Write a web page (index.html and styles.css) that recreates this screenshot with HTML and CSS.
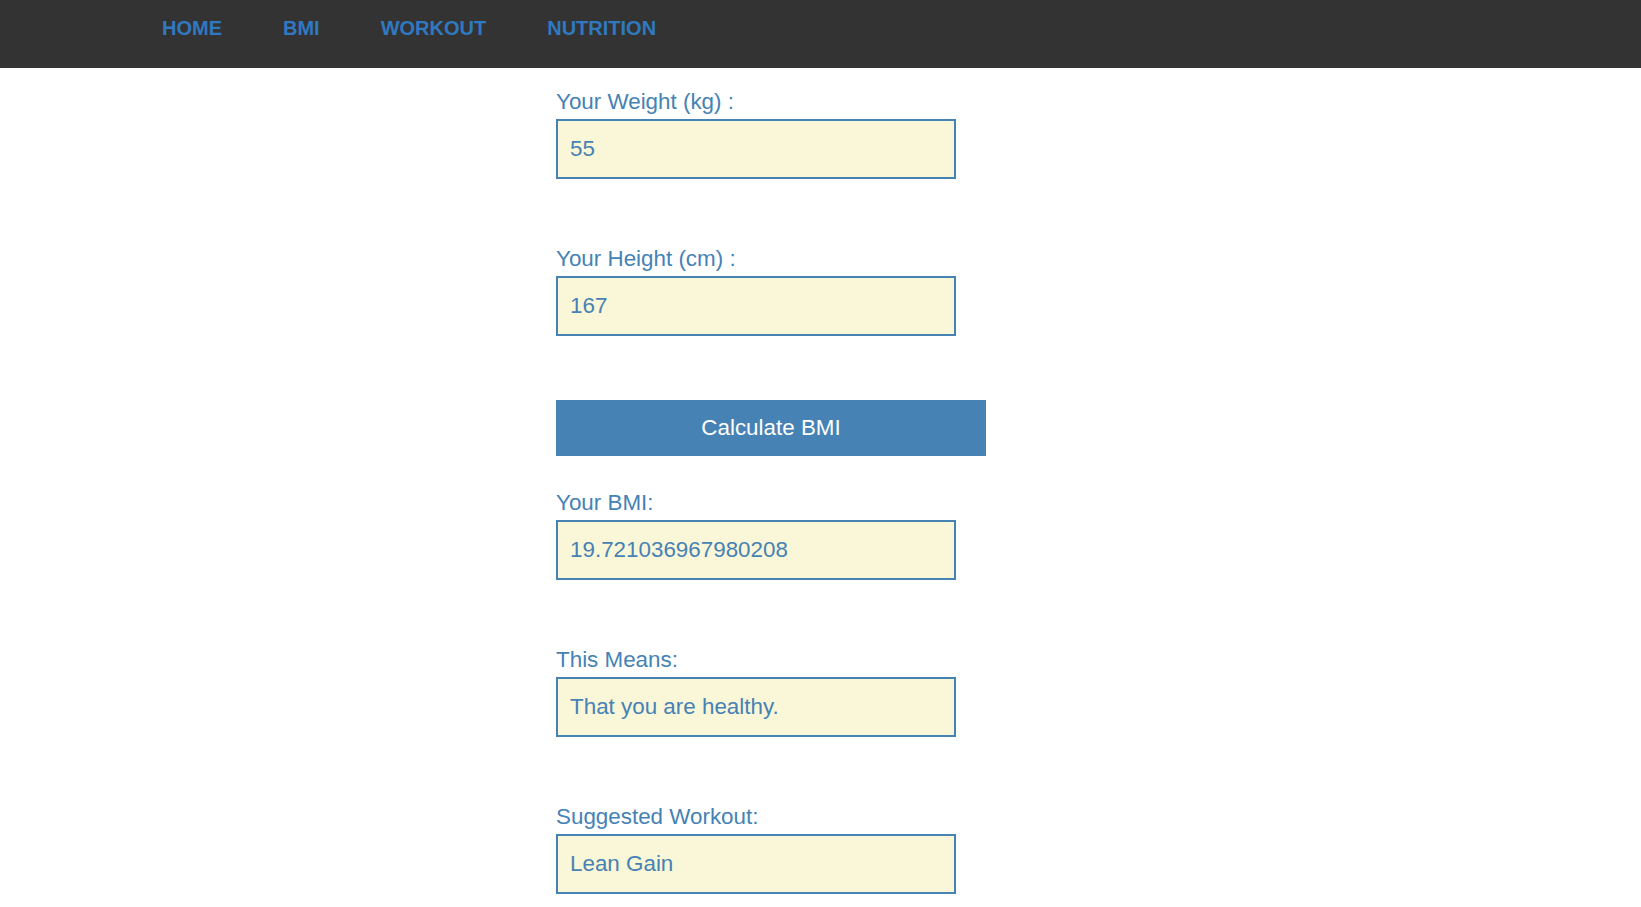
FILE: index.html
```html
<!DOCTYPE html>
<html lang="en">
<head>
<meta charset="utf-8">
<title>BMI Calculator</title>
<link rel="stylesheet" href="styles.css">
</head>
<body>
<nav class="topnav">
  <ul class="menu">
    <li><a href="#" class="menu-link">HOME</a></li>
    <li><a href="#" class="menu-link">BMI</a></li>
    <li><a href="#" class="menu-link">WORKOUT</a></li>
    <li><a href="#" class="menu-link">NUTRITION</a></li>
  </ul>
</nav>
<main class="bmi-form">
  <div class="field">
    <label class="field-label" for="weight">Your Weight (kg) :</label>
    <input class="field-input" id="weight" type="text" value="55">
  </div>
  <div class="field field-next">
    <label class="field-label" for="height">Your Height (cm) :</label>
    <input class="field-input" id="height" type="text" value="167">
  </div>
  <button class="calc-btn" type="button">Calculate BMI</button>
  <div class="field field-after-btn">
    <label class="field-label" for="bmi">Your BMI:</label>
    <input class="field-input" id="bmi" type="text" value="19.721036967980208">
  </div>
  <div class="field field-result">
    <label class="field-label" for="means">This Means:</label>
    <input class="field-input" id="means" type="text" value="That you are healthy.">
  </div>
  <div class="field field-result">
    <label class="field-label" for="workout">Suggested Workout:</label>
    <input class="field-input" id="workout" type="text" value="Lean Gain">
  </div>
</main>
</body>
</html>
```

FILE: styles.css
```css
html, body {
  margin: 0;
  padding: 0;
  background: #ffffff;
  font-family: "Liberation Sans", Arial, sans-serif;
}

.topnav {
  background: #333333;
  height: 68px;
}

.menu {
  list-style: none;
  margin: 0;
  padding: 13px 0 0 162px;
  display: flex;
  gap: 61px;
}

.menu-link {
  display: block;
  color: #3079c0;
  font-weight: bold;
  font-size: 20px;
  line-height: 30px;
  text-decoration: none;
}

.bmi-form {
  display: flex;
  flex-direction: column;
  align-items: flex-start;
  padding: 22.4px 0 0 556px;
}

.field {
  display: flex;
  flex-direction: column;
  align-items: flex-start;
}

.field-next {
  margin-top: 67.4px;
}

.field-after-btn {
  margin-top: 35.1px;
}

.field-result {
  margin-top: 68px;
}

.field-label {
  display: block;
  color: #4682b4;
  font-size: 22.4px;
  line-height: 24px;
  margin-bottom: 5px;
}

.field-input {
  box-sizing: border-box;
  width: 400px;
  height: 60px;
  margin: 0;
  padding: 0 12px;
  border: 2px solid #4682b4;
  border-radius: 0;
  background: #faf6d8;
  color: #4682b4;
  font-family: "Liberation Sans", Arial, sans-serif;
  font-size: 22.4px;
  outline: none;
}

.calc-btn {
  margin-top: 64.2px;
  width: 430px;
  height: 56px;
  border: none;
  border-radius: 0;
  background: #4682b4;
  color: #ffffff;
  font-family: "Liberation Sans", Arial, sans-serif;
  font-size: 22.4px;
  padding: 0;
  cursor: pointer;
}
```
